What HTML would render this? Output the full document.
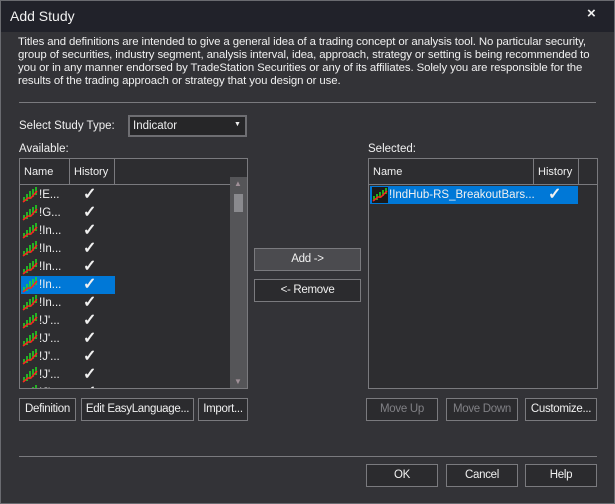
<!DOCTYPE html><html><head><style>
body{margin:0;width:615px;height:504px;overflow:hidden;background:#333337;font-family:"Liberation Sans",sans-serif;color:#f0f0f0;font-size:11.5px}
.a{position:absolute;white-space:nowrap}
.win{position:absolute;left:0;top:0;width:613px;height:502px;border:1px solid #6a6b70;background:#333337}
.tb{position:absolute;left:0;top:0;width:613px;height:31px;background:#21222a}
.btn{position:absolute;box-sizing:border-box;border:1px solid #7a7a7e;background:#2b2b2e;text-align:center;line-height:21px;font-size:11.5px;color:#f0f0f0;white-space:nowrap;overflow:hidden;letter-spacing:-0.3px}
.dis{color:#808085}
.list{position:absolute;box-sizing:border-box;border:1px solid #7a7a7e;background:#2d2d30}
.hd{position:absolute;top:0;height:26px;box-sizing:border-box;border-right:1px solid #7a7a7e;border-bottom:1px solid #7a7a7e;line-height:26px;padding-left:4px;background:#2d2d30;font-size:11px}
.row{position:absolute;height:18px;line-height:18px}
.ck{position:absolute;font-size:16px;font-weight:bold}
</style></head><body><div class="win">
<div class="tb"><div class="a" style="left:9px;top:7px;font-size:14px">Add Study</div><div class="a" style="left:586px;top:4px;font-size:15px;font-weight:bold">×</div></div>
<div class="a" style="left:17px;top:35px;line-height:13px;font-size:11.4px;letter-spacing:-0.1px">Titles and definitions are intended to give a general idea of a trading concept or analysis tool. No particular security,<br>group of securities, industry segment, analysis interval, idea, approach, strategy or setting is being recommended to<br>you or in any manner endorsed by TradeStation Securities or any of its affiliates. Solely you are responsible for the<br>results of the trading approach or strategy that you design or use.</div>
<div class="a" style="left:18px;top:101px;width:577px;height:1px;background:#7a7a7e"></div>
<div class="a" style="left:18px;top:119px">Select Study Type:</div>
<div class="a" style="left:127px;top:114px;width:119px;height:22px;box-sizing:border-box;border:2px solid #6e6e72;background:#262628"><span class="a" style="left:3px;top:3px">Indicator</span><span class="a" style="left:104px;top:4px;font-size:7px">▼</span></div>
<div class="a" style="left:18px;top:142px">Available:</div>
<div class="a" style="left:367px;top:142px">Selected:</div>
<div class="list" style="left:18px;top:157px;width:229px;height:231px;overflow:hidden">
<div class="hd" style="left:0;width:50px">Name</div><div class="hd" style="left:50px;width:45px">History</div><div class="a" style="left:95px;top:0;width:134px;height:26px;box-sizing:border-box;border-bottom:1px solid #7a7a7e"></div>
<div class="a" style="left:210px;top:18px;width:17px;height:212px;background:#555558"><div class="a" style="left:4px;top:17px;width:9px;height:18px;background:#8a8a8e"></div><div class="a" style="left:4px;top:2px;color:#a09098;font-size:8px">▲</div><div class="a" style="left:4px;top:200px;color:#a09098;font-size:8px">▼</div></div>
<div id="rows"></div>
</div>
<div class="list" style="left:367px;top:157px;width:230px;height:231px">
<div class="hd" style="left:0;width:165px">Name</div><div class="hd" style="left:165px;width:45px">History</div><div class="a" style="left:210px;top:0;width:18px;height:26px;box-sizing:border-box;border-bottom:1px solid #7a7a7e"></div>
<div class="row" style="left:1px;top:27px;width:208px;background:#0078d7"><svg class="a" style="left:2px;top:1px" width="16" height="16"><rect width="16" height="16" fill="#1a1a1a"/><path d="M2 14V9M5 13V7M8 11V5M11 9V3M14 7V1" stroke="#20e020" stroke-width="1.5"/><path d="M1 14L6 10L9 10L15 4" stroke="#ff2020" stroke-width="1.5" fill="none"/></svg><span class="a" style="left:19px;font-size:11.5px">!IndHub-RS_BreakoutBars...</span><span class="ck" style="left:178px;top:0px">✓</span></div>
</div>
<div class="btn" style="left:253px;top:247px;width:107px;height:23px;background:#4b4b4f">Add -&gt;</div>
<div class="btn" style="left:253px;top:278px;width:107px;height:23px">&lt;- Remove</div>
<div class="btn" style="left:18px;top:397px;width:57px;height:23px">Definition</div>
<div class="btn" style="left:80px;top:397px;width:113px;height:23px">Edit EasyLanguage...</div>
<div class="btn" style="left:197px;top:397px;width:50px;height:23px">Import...</div>
<div class="btn dis" style="left:365px;top:397px;width:72px;height:23px">Move Up</div>
<div class="btn dis" style="left:445px;top:397px;width:72px;height:23px">Move Down</div>
<div class="btn" style="left:524px;top:397px;width:72px;height:23px">Customize...</div>
<div class="a" style="left:18px;top:455px;width:578px;height:1px;background:#7a7a7e"></div>
<div class="btn" style="left:365px;top:463px;width:72px;height:23px">OK</div>
<div class="btn" style="left:445px;top:463px;width:72px;height:23px">Cancel</div>
<div class="btn" style="left:524px;top:463px;width:72px;height:23px">Help</div>
</div>
<script>
var n=["!E...","!G...","!In...","!In...","!In...","!In...","!In...","!J'...","!J'...","!J'...","!J'...","!J'..."],h="";
n.forEach(function(t,i){var s=i==5;h+='<div class="row" style="left:1px;top:'+(27+18*i)+'px;width:94px;'+(s?'background:#0078d7':'')+'"><svg class="a" style="left:1px;top:1px" width="16" height="16"><path d="M2 15V10M5 14V7M8 12V4M11 10V2M14 8V0" stroke="#20e020" stroke-width="1.5"/><path d="M1 15L6 11L9 11L15 4" stroke="#ff2020" stroke-width="1.5" fill="none"/></svg><span class="a" style="left:18px">'+t+'</span><span class="ck" style="left:62px;top:0px">✓</span></div>';});
document.getElementById("rows").innerHTML=h;
</script>
</body></html>
